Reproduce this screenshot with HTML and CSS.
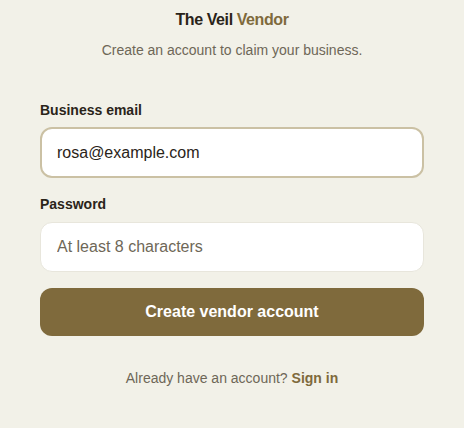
FILE: index.html
```html
<!DOCTYPE html>
<html lang="en">
<head>
<meta charset="utf-8">
<title>The Veil Vendor</title>
<link rel="stylesheet" href="styles.css">
</head>
<body>
<main class="page">
  <header class="head">
    <h1 class="brand">The Veil <span class="brand-accent">Vendor</span></h1>
    <p class="sub">Create an account to claim your business.</p>
  </header>
  <form class="form">
    <label class="field">
      <span class="label">Business email</span>
      <input class="input input-focus" type="email" value="rosa@example.com">
    </label>
    <label class="field">
      <span class="label">Password</span>
      <input class="input" type="password" placeholder="At least 8 characters">
    </label>
    <button class="btn" type="button">Create vendor account</button>
  </form>
  <p class="foot">Already have an account? <a class="link" href="#">Sign in</a></p>
</main>
</body>
</html>
```

FILE: styles.css
```css
* { box-sizing: border-box; }
html, body { margin: 0; padding: 0; }
body {
  background: #f2f1e8;
  font-family: "Liberation Sans", Arial, sans-serif;
  color: #2a2419;
}
.page {
  padding: 8px 40px 0;
}
.head {
  text-align: center;
}
.brand {
  margin: 0;
  font-size: 16px;
  line-height: 24px;
  font-weight: 700;
  letter-spacing: -0.4px;
  color: #2a2419;
}
.brand-accent { color: #7f6a3c; }
.sub {
  margin: 8px 0 0;
  font-size: 14px;
  line-height: 20px;
  color: #6e6757;
}
.form {
  margin-top: 40px;
  display: flex;
  flex-direction: column;
}
.field {
  display: flex;
  flex-direction: column;
  margin-bottom: 16px;
}
.label {
  font-size: 14px;
  line-height: 20px;
  font-weight: 700;
  color: #2a2419;
  margin-bottom: 7px;
}
.field + .field .label { margin-bottom: 8px; }
.input {
  height: 50px;
  border: 1px solid #e8e6dc;
  border-radius: 12px;
  background: #ffffff;
  padding: 0 16px;
  font-family: "Liberation Sans", Arial, sans-serif;
  font-size: 16px;
  color: #2a2419;
  outline: none;
}
.input::placeholder { color: #6e6757; opacity: 1; }
.input-focus {
  height: 51px;
  border: 2px solid #cbc1a4;
  padding: 0 15px;
}
.btn {
  height: 48px;
  border: 0;
  border-radius: 12px;
  background: #7f6a3c;
  color: #ffffff;
  font-family: "Liberation Sans", Arial, sans-serif;
  font-size: 16px;
  font-weight: 700;
}
.foot {
  margin: 32px 0 0;
  text-align: center;
  font-size: 14px;
  line-height: 20px;
  color: #6e6757;
}
.link {
  color: #7f6a3c;
  font-weight: 700;
  text-decoration: none;
}
```
